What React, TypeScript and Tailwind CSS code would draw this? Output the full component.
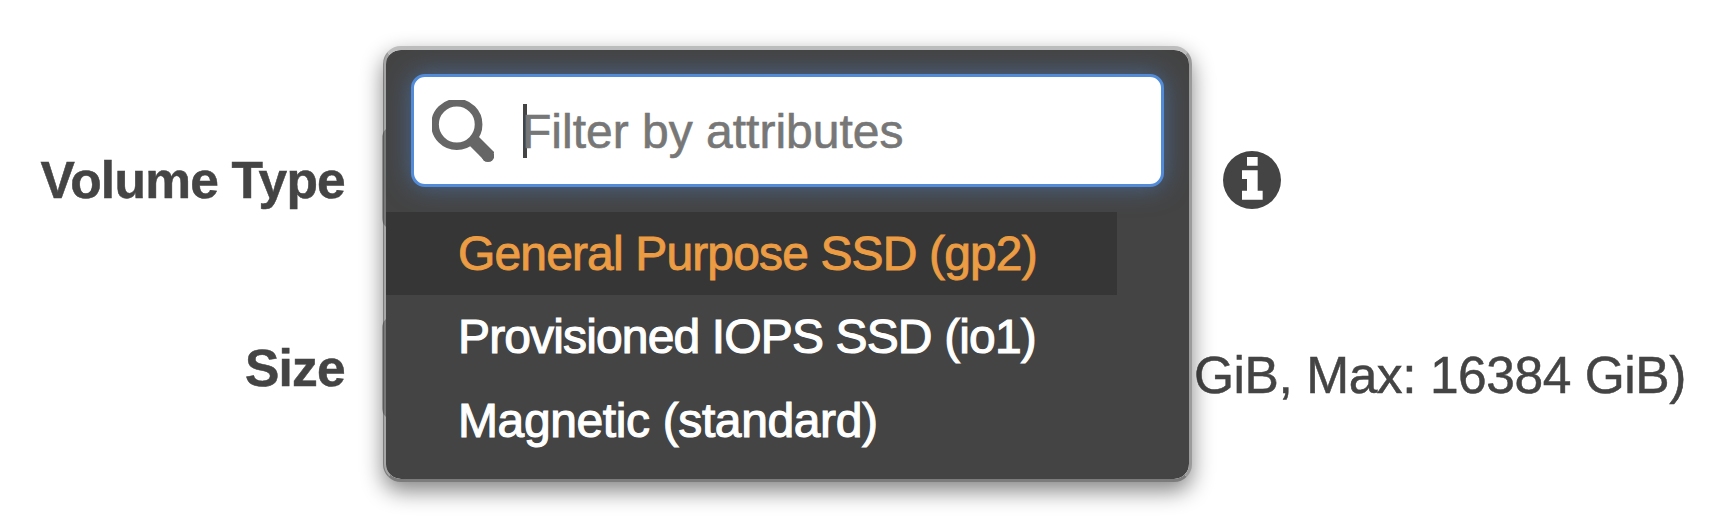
import React from "react";

const options = [
  { label: "General Purpose SSD (gp2)", className: "bg-[#363636] tracking-[-0.86px] text-[#ec9c42] [-webkit-text-stroke:0.9px_#ec9c42]" },
  { label: "Provisioned IOPS SSD (io1)", className: "tracking-[-0.86px] text-white [-webkit-text-stroke:1.1px_#fff]" },
  { label: "Magnetic (standard)", className: "tracking-[-0.38px] text-white [-webkit-text-stroke:1.1px_#fff]" },
];

function SearchIcon() {
  return (
    <svg className="h-[62px] w-[62px] shrink-0" viewBox="22 45 185 185">
      <circle cx="96" cy="118" r="65" fill="none" stroke="#666" strokeWidth="23" />
      <path d="M142 162 L194 214" fill="none" stroke="#666" strokeWidth="38" />
      <circle cx="189" cy="211" r="19" fill="#666" />
    </svg>
  );
}

function InfoIcon() {
  return (
    <svg className="h-[58px] w-[58px] shrink-0" viewBox="38 31 174 174">
      <circle cx="125" cy="118" r="87" fill="#444" />
      <path fill="#fff" d="M110 49h32v26h-32zM95 89h47v61h15v27H95v-27h15v-35H95z" />
    </svg>
  );
}

function VolumeTypeMenu() {
  return (
    <div className="absolute left-[383px] top-[46px] flex h-[436px] w-[809px] flex-col rounded-[18px] border-[3px] border-b-[#7c7c7c] border-l-black/35 border-r-[#9b9b9b] border-t-4 border-t-[#bdbdbd] bg-[#444] bg-clip-padding pt-[24px] shadow-[0_9px_22px_rgba(0,0,0,0.48)]">
      <div className="ml-[25px] flex h-[113px] w-[753px] items-center rounded-[14px] border-[3px] border-[#528cd9] bg-white pl-[18px] shadow-[0_0_26px_rgba(82,140,217,0.5)]">
        <SearchIcon />
        <div className="ml-[29px] h-[54px] w-1 bg-[#444]" />
        <span className="-ml-[5px] whitespace-nowrap pt-0.5 text-[48px] leading-[60px] text-[#777] [-webkit-text-stroke:0.6px_#777]">Filter by attributes</span>
      </div>
      <ul className="mt-[25px] w-[731px] text-[48px] leading-[83px]">
        {options.map(({ label, className }) => (
          <li key={label} className={`h-[83.33px] whitespace-nowrap pl-[72px] ${className}`}>
            {label}
          </li>
        ))}
      </ul>
    </div>
  );
}

export default function App() {
  return (
    <main className="relative h-[528px] w-[1714px] overflow-hidden bg-white pt-[126px] font-['Liberation_Sans',Arial,sans-serif] leading-[60px] text-[#444]">
      <div className="flex h-[104px] items-center">
        <div className="w-[345px] pt-1 text-right text-[51.5px] font-bold tracking-[-0.75px] [-webkit-text-stroke:0.5px_#444]">Volume Type</div>
        <div className="ml-[37px] h-full w-[800px] rounded-[12px] border-4 border-[#bbb]" />
        <div className="ml-[41px] pt-[3px]">
          <InfoIcon />
        </div>
      </div>
      <div className="mt-[86px] flex h-[104px] items-center">
        <div className="w-[345px] text-right text-[51.5px] font-bold tracking-[-0.75px] [-webkit-text-stroke:0.5px_#444]">Size</div>
        <div className="ml-[37px] h-full w-[600px] rounded-[12px] border-4 border-[#bbb]" />
        <div className="ml-[212px] whitespace-nowrap pt-[14px] text-[51.5px] tracking-[-0.45px] [-webkit-text-stroke:0.5px_#444]">GiB, Max: 16384 GiB)</div>
      </div>
      <VolumeTypeMenu />
    </main>
  );
}
